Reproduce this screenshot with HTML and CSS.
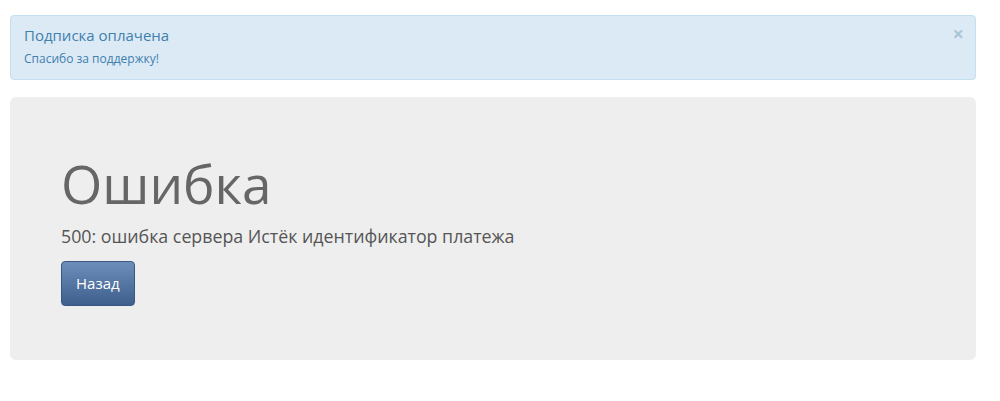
FILE: index.html
```html
<!DOCTYPE html>
<html lang="ru">
<head>
  <meta charset="UTF-8" />
  <meta name="viewport" content="width=device-width, initial-scale=1.0" />
  <title>Ошибка</title>
  <link rel="stylesheet" href="styles.css">
</head>
<body>
  <div class="page">
    <div class="alert">
      <button class="alert-close" type="button">&times;</button>
      <div class="alert-title">Подписка оплачена</div>
      <div class="alert-text">Спасибо за поддержку!</div>
    </div>

    <div class="jumbotron">
      <h1>Ошибка</h1>
      <p>500: ошибка сервера Истёк идентификатор платежа</p>
      <a class="btn" href="#">Назад</a>
    </div>
  </div>
</body>
</html>
```

FILE: styles.css
```css
body {
  margin: 0;
  padding: 0;
  font-family: 'Open Sans', sans-serif;
  background: #fff;
  color: #555;
}

.page {
  padding: 15px 24px 0 10px;
}

/* Плашка сверху */
.alert {
  position: relative;
  background: #dceaf6;
  border: 1px solid #c3e0f0;
  border-radius: 4px;
  padding: 9px 13px 12px 13px;
  color: #3f80ad;
  margin-bottom: 17px;
}

.alert-title {
  font-size: 15px;
  line-height: 20px;
}

.alert-text {
  font-size: 12px;
  line-height: 16px;
  margin-top: 6px;
}

.alert-close {
  position: absolute;
  top: 8px;
  right: 11px;
  border: none;
  background: none;
  padding: 0;
  font-size: 20px;
  line-height: 20px;
  font-weight: bold;
  color: #a9c6d8;
  cursor: pointer;
  font-family: 'Open Sans', sans-serif;
}

.jumbotron {
  background: #eeeeee;
  border-radius: 6px;
  padding: 52px 51px 54px 51px;
}

.jumbotron h1 {
  margin: 0;
  font-size: 53px;
  font-weight: 400;
  line-height: 70px;
  color: #666;
}

.jumbotron p {
  margin: 4px 0 12px 0;
  font-size: 17.8px;
  line-height: 26px;
  color: #555;
}

.btn {
  display: inline-block;
  padding: 11px 14px;
  font-size: 15px;
  line-height: 21px;
  color: #fff;
  text-decoration: none;
  border: 1px solid #3a5681;
  border-radius: 4px;
  background: linear-gradient(to bottom, #6d8ebb, #3e5e8c);
}
```
